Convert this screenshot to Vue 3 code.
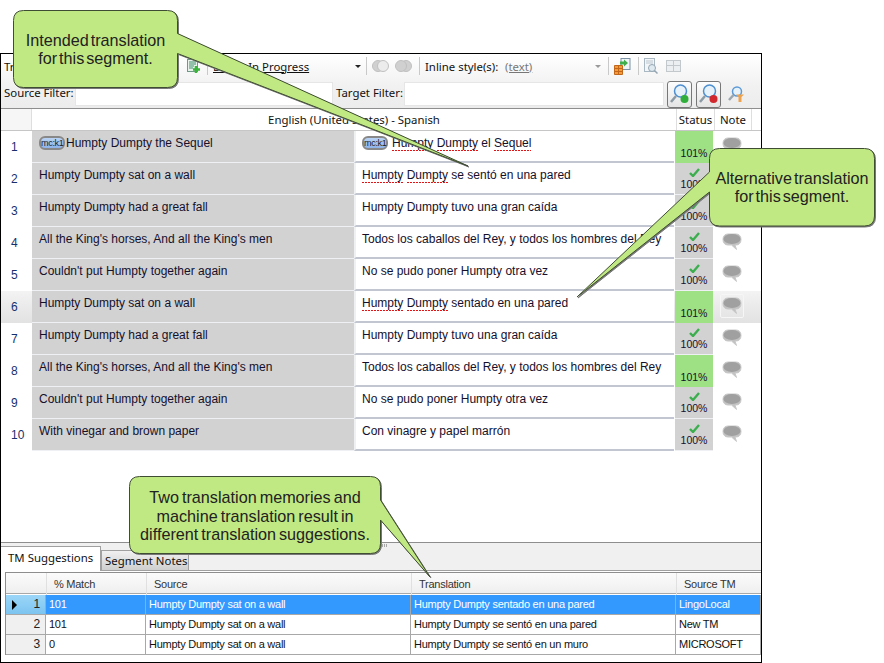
<script setup>
const rows = [
  { n: 1, source: "Humpty Dumpty the Sequel", tag: true, target: [["Humpty", 1], [" ", 0], ["Dumpty", 1], [" el ", 0], ["Sequel", 1]], pct: "101%", exact: true },
  { n: 2, source: "Humpty Dumpty sat on a wall", target: [["Humpty", 1], [" ", 0], ["Dumpty", 1], [" se sentó en una pared", 0]], pct: "100%" },
  { n: 3, source: "Humpty Dumpty had a great fall", target: [["Humpty Dumpty tuvo una gran caída", 0]], pct: "100%" },
  { n: 4, source: "All the King's horses, And all the King's men", target: [["Todos los caballos del Rey, y todos los hombres del Rey", 0]], pct: "100%" },
  { n: 5, source: "Couldn't put Humpty together again", target: [["No se pudo poner Humpty otra vez", 0]], pct: "100%" },
  { n: 6, source: "Humpty Dumpty sat on a wall", target: [["Humpty", 1], [" ", 0], ["Dumpty", 1], [" sentado en una pared", 0]], pct: "101%", exact: true, current: true },
  { n: 7, source: "Humpty Dumpty had a great fall", target: [["Humpty Dumpty tuvo una gran caída", 0]], pct: "100%" },
  { n: 8, source: "All the King's horses, And all the King's men", target: [["Todos los caballos del Rey, y todos los hombres del Rey", 0]], pct: "101%", exact: true },
  { n: 9, source: "Couldn't put Humpty together again", target: [["No se pudo poner Humpty otra vez", 0]], pct: "100%" },
  { n: 10, source: "With vinegar and brown paper", target: [["Con vinagre y papel marrón", 0]], pct: "100%" },
];

const suggestions = [
  { n: 1, match: "101", source: "Humpty Dumpty sat on a wall", translation: "Humpty Dumpty sentado en una pared", tm: "LingoLocal", selected: true },
  { n: 2, match: "101", source: "Humpty Dumpty sat on a wall", translation: "Humpty Dumpty se sentó en una pared", tm: "New TM" },
  { n: 3, match: "0", source: "Humpty Dumpty sat on a wall", translation: "Humpty Dumpty se sentó en un muro", tm: "MICROSOFT" },
];
</script>

<template>
  <div class="page">
    <div class="window">
      <div class="toolbar">
        <div class="tool-row">
          <span class="tool-label">Tr</span>
          <svg class="add-icon" width="14" height="15" viewBox="0 0 14 15">
            <rect x="0.500" y="0.500" width="10" height="12" fill="#e8f2ea" stroke="#6d9a86" />
            <path d="M2 3h7M2 5h7M2 7h5M2 9h4" stroke="#3f8f6a" />
            <path d="M9 7v7M6 10.500h7" stroke="#3cb43c" stroke-width="2.500" />
          </svg>
          <span class="sep"></span>
          <span class="status-select"><span class="status-first">Draft</span> In Progress</span>
          <span class="arrow dark"></span>
          <span class="sep"></span>
          <svg class="rings" width="17" height="14" viewBox="0 0 17 14">
            <circle cx="6" cy="7" r="5.500" fill="#d0d0d0" stroke="#c0c0c0" />
            <circle cx="11" cy="7" r="5.500" fill="#ececec" stroke="#c0c0c0" />
          </svg>
          <svg class="rings" width="17" height="14" viewBox="0 0 17 14">
            <circle cx="11" cy="7" r="5.500" fill="#d0d0d0" stroke="#c0c0c0" />
            <circle cx="6" cy="7" r="5.500" fill="#d0d0d0" stroke="#c0c0c0" />
          </svg>
          <span class="sep"></span>
          <span class="inline-label">Inline style(s):</span>
          <span class="inline-value">(text)</span>
          <span class="arrow light"></span>
          <span class="sep"></span>
          <svg class="export" width="17" height="17" viewBox="0 0 17 17">
            <rect x="7" y="0.500" width="9" height="11" fill="#eef4f8" stroke="#7d93a5" />
            <path d="M0.500 7.500h8v9h-8z" fill="#f29a3c" stroke="#c2661a" />
            <path d="M0.500 10.500h8M0.500 13.500h8M4.500 7.500v9" stroke="#c2661a" />
            <path d="M6 3.500h4v-2l4 3.500-4 3.500v-2h-4z" fill="#3fae4b" />
          </svg>
          <span class="sep"></span>
          <svg class="preview" width="15" height="17" viewBox="0 0 15 17">
            <rect x="0.500" y="0.500" width="10" height="13" fill="#f3f6f8" stroke="#a9b8c2" />
            <path d="M2 3h7M2 5h7" stroke="#bcc8d0" />
            <circle cx="8" cy="10" r="3.500" fill="#dfeaf0" stroke="#93a6b2" />
            <path d="M10.500 12.500l3 3" stroke="#93a6b2" stroke-width="1.500" />
          </svg>
          <svg class="grid-icon" width="15" height="12" viewBox="0 0 15 12">
            <rect x="0.500" y="0.500" width="14" height="11" fill="#eceff1" stroke="#c3c8cc" />
            <path d="M7.500 0.500v11M0.500 5.500h14" stroke="#c3c8cc" />
          </svg>
        </div>
        <div class="filter-row">
          <label class="filter-label source-label">Source Filter:</label>
          <div class="filter-input source-input"></div>
          <label class="filter-label target-label">Target Filter:</label>
          <div class="filter-input target-input"></div>
          <button class="find-btn">
            <svg width="21" height="22" viewBox="0 0 21 22">
              <circle cx="11.500" cy="8" r="6" fill="#e6f1fa" stroke="#4d8fd0" stroke-width="1.500" />
              <path d="M7 13l-5 6" stroke="#8c9aa5" stroke-width="2.500" />
              <circle cx="15.500" cy="16" r="4" fill="#2fae3c" />
            </svg>
          </button>
          <button class="find-btn">
            <svg width="21" height="22" viewBox="0 0 21 22">
              <circle cx="11.500" cy="8" r="6" fill="#e6f1fa" stroke="#4d8fd0" stroke-width="1.500" />
              <path d="M7 13l-5 6" stroke="#8c9aa5" stroke-width="2.500" />
              <circle cx="15.500" cy="16" r="4" fill="#d0282e" />
            </svg>
          </button>
          <svg class="find-plain" width="16" height="19" viewBox="0 0 16 19">
            <circle cx="9" cy="6.500" r="4.500" fill="#e6f1fa" stroke="#5b9ad6" stroke-width="1.500" />
            <path d="M5.500 10l-4.500 5" stroke="#9aa6b0" stroke-width="2.500" />
            <path d="M8 9.500h8l-2.500 2.500v5h-3v-5z" fill="#eda24e" />
          </svg>
        </div>
      </div>

      <div class="grid-head">
        <div class="head-num"></div>
        <div class="head-lang">English (United States) - Spanish</div>
        <div class="head-cell">Status</div>
        <div class="head-cell">Note</div>
      </div>

      <div class="grid-body">
        <div v-for="row in rows" :key="row.n" class="row" :class="{ current: row.current }">
          <div class="num">{{ row.n }}</div>
          <div class="source">
            <span v-if="row.tag" class="tag">mc:k1</span>{{ row.source }}
          </div>
          <div class="target" :class="{ tagged: row.tag }">
            <span v-if="row.tag" class="tag">mc:k1</span>
            <template v-for="(part, i) in row.target" :key="i"><span :class="{ misspelt: part[1] }">{{ part[0] }}</span></template>
          </div>
          <div class="status" :class="{ exact: row.exact }">
            <svg v-if="!row.exact" class="check" width="11" height="9" viewBox="0 0 11 9">
              <path d="M1 5l3 3 6-7" fill="none" stroke="#3dae4f" stroke-width="2.400" />
            </svg>
            <span>{{ row.pct }}</span>
          </div>
          <div class="note">
            <span class="note-btn">
              <svg width="20" height="17" viewBox="0 0 20 17">
                <path d="M6 1h8c3 0 5 2 5 5.500S17 12 14 12h-1l1.500 4.500-5-4.500H6c-3 0-5-2-5-5.500S3 1 6 1z" fill="#c2c2c2" stroke="#c8c8c8" />
                <ellipse cx="10" cy="6" rx="8.500" ry="5" fill="#a0a0a0" />
              </svg>
            </span>
          </div>
        </div>
      </div>

      <div class="spacer"></div>
      <div class="grip"></div>

      <div class="tabs">
        <div class="tab active">TM Suggestions</div>
        <div class="tab">Segment Notes</div>
      </div>

      <div class="tm-panel">
        <div class="tm-table">
          <div class="tm-head">
            <div class="tm-corner"></div>
            <div class="tm-th">% Match</div>
            <div class="tm-th">Source</div>
            <div class="tm-th">Translation</div>
            <div class="tm-th">Source TM</div>
          </div>
          <div v-for="s in suggestions" :key="s.n" class="tm-row" :class="{ selected: s.selected }">
            <div class="tm-num">
              <span v-if="s.selected" class="pointer"></span>
              <span class="tm-n">{{ s.n }}</span>
            </div>
            <div class="tm-td">{{ s.match }}</div>
            <div class="tm-td">{{ s.source }}</div>
            <div class="tm-td">{{ s.translation }}</div>
            <div class="tm-td">{{ s.tm }}</div>
          </div>
        </div>
      </div>
    </div>

    <svg class="shapes" width="884" height="663" viewBox="0 0 884 663">
      <path d="M23.500 10.500H167.500Q177.500 10.500 177.500 20.500V33.500L468 166L177.500 53.500V77.500Q177.500 87.500 167.500 87.500H23.500Q13.500 87.500 13.500 77.500V20.500Q13.500 10.500 23.500 10.500Z" />
      <path d="M719.500 148.500H864.500Q874.500 148.500 874.500 158.500V216Q874.500 226 864.500 226H719.500Q709.500 226 709.500 216V192L577 297L709.500 172V158.500Q709.500 148.500 719.500 148.500Z" />
      <path d="M139.500 476.500H370.500Q380.500 476.500 380.500 486.500V500L430 577L380.500 520V543.500Q380.500 553.500 370.500 553.500H139.500Q129.500 553.500 129.500 543.500V486.500Q129.500 476.500 139.500 476.500Z" />
    </svg>
    <div class="callout one">Intended translation<br />for this segment.</div>
    <div class="callout two">Alternative translation<br />for this segment.</div>
    <div class="callout three">Two translation memories and<br />machine translation result in<br />different translation suggestions.</div>
  </div>
</template>

<style scoped>
.page {
  position: relative;
  width: 884px;
  height: 663px;
  background: #fff;
  overflow: hidden;
  padding-top: 53px;
  box-sizing: border-box;
  font-family: "Liberation Sans", Arial, sans-serif;
}

.window {
  position: relative;
  width: 762px;
  height: 610px;
  box-sizing: border-box;
  border: 1px solid #000;
  display: flex;
  flex-direction: column;
  background: #fff;
  font-family: "Noto Sans", Tahoma, sans-serif;
  font-size: 11.400px;
  color: #111;
}

.toolbar {
  height: 54px;
  flex: none;
  background: linear-gradient(#fff, #f1f1f1 60%, #ececec);
  border-bottom: 1px solid #8e8e8e;
}

.tool-row {
  height: 26px;
  box-sizing: border-box;
  padding: 0 0 2px 3px;
  display: flex;
  align-items: center;
}

.tool-label {
  width: 183px;
  flex: none;
}

.add-icon {
  margin-right: 6px;
  flex: none;
}

.sep {
  width: 1px;
  height: 18px;
  background: #c9c9c9;
  flex: none;
}

.status-select {
  width: 140px;
  flex: none;
  margin-left: 5px;
  text-decoration: underline;
  color: #111;
  white-space: nowrap;
}

.status-first {
  letter-spacing: 1px;
}

.arrow {
  width: 0;
  height: 0;
  flex: none;
  border-left: 3px solid transparent;
  border-right: 3px solid transparent;
  border-top: 3px solid #222;
  margin-left: 2px;
  margin-right: 5px;
}

.arrow.light {
  border-top-color: #999;
  margin-left: 0;
  margin-right: 7px;
}

.rings {
  margin-left: 5px;
  flex: none;
}

.rings + .rings {
  margin-left: 6px;
}

.rings + .sep {
  margin-left: 7px;
}

.inline-label {
  width: 72px;
  flex: none;
  margin-left: 5px;
  white-space: nowrap;
}

.inline-value {
  width: 90px;
  flex: none;
  margin-left: 8px;
  color: #777;
  text-decoration: underline;
}

.export {
  margin-left: 5px;
  margin-right: 7px;
  flex: none;
}

.preview {
  margin-left: 5px;
  flex: none;
}

.grid-icon {
  margin-left: 7px;
  flex: none;
}

.filter-row {
  height: 28px;
  display: flex;
  align-items: center;
}

.filter-label {
  white-space: nowrap;
  padding-bottom: 4px;
  flex: none;
}

.source-label {
  width: 70px;
  margin-left: 3px;
}

.target-label {
  width: 66px;
  margin-left: 3px;
}

.filter-input {
  height: 24px;
  flex: none;
  background: #fff;
  border: 1px solid #e6e6e6;
  box-sizing: border-box;
}

.source-input {
  width: 258px;
  margin-left: 1px;
}

.target-input {
  width: 260px;
  margin-left: 2px;
}

.find-btn {
  width: 25px;
  height: 27px;
  flex: none;
  padding: 0;
  margin-left: 3px;
  display: flex;
  align-items: center;
  justify-content: center;
  background: linear-gradient(#fdfdfd, #e4e4e4);
  border: 1px solid #777;
  border-radius: 3px;
}

.find-btn + .find-btn {
  margin-left: 4px;
}

.find-plain {
  margin-left: 7px;
  flex: none;
}

.grid-head {
  height: 21px;
  flex: none;
  display: grid;
  grid-template-columns: 31px 644px 38px 38px;
  background: #fff;
  border-bottom: 1px solid #c6c6c6;
  line-height: 21px;
}

.head-num {
  background: #f6f6f6;
  border-right: 1px solid #dedede;
}

.head-lang {
  text-align: center;
}

.head-cell {
  text-align: center;
  border-left: 1px solid #dedede;
}

.head-cell:last-child {
  border-right: 1px solid #dedede;
}

.row {
  height: 32px;
  display: grid;
  grid-template-columns: 31px 322px 321px 38px 38px;
  box-sizing: border-box;
  font-family: "Liberation Sans", Arial, sans-serif;
  font-size: 12px;
}

.row.current {
  background: linear-gradient(#f3f3f3, #e2e2e2);
}

.num {
  padding: 9px 0 0 10px;
  color: #16306e;
  font-size: 12px;
}

.source {
  background: #d2d2d2;
  border-bottom: 1px solid #eef0f4;
  padding: 5px 0 0 7px;
  color: #14102c;
  white-space: nowrap;
}

.target {
  background: #fff;
  border-left: 2px solid #eef0f2;
  border-bottom: 2px solid #c2c6d0;
  margin-right: 1px;
  padding: 5px 0 0 6px;
  white-space: nowrap;
  color: #14102c;
}

.tag {
  display: inline-block;
  box-sizing: border-box;
  width: 26px;
  height: 14px;
  margin-right: 1px;
  border: 2px solid #888;
  border-radius: 6px;
  background: linear-gradient(#b9d3f5, #8db3ea);
  color: #222;
  font-size: 9px;
  line-height: 10px;
  text-align: center;
  vertical-align: 1px;
  letter-spacing: -0.3px;
}

.target .tag {
  margin-right: 4px;
}

.misspelt {
  padding-bottom: 1px;
  background-image: repeating-linear-gradient(90deg, #e01414 0 2px, transparent 2px 3px);
  background-size: 100% 1px;
  background-repeat: no-repeat;
  background-position: 0 100%;
}

.status {
  background: #d2d2d2;
  display: flex;
  flex-direction: column;
  align-items: center;
  justify-content: flex-end;
  font-size: 10.500px;
  padding-bottom: 4px;
  box-sizing: border-box;
  border-bottom: 1px solid #eef0f4;
  color: #14102c;
}

.status.exact {
  background: #9de184;
  border-bottom: none;
}

.check {
  margin-bottom: 1px;
}

.note {
  display: flex;
  justify-content: center;
  align-items: center;
}

.note-btn {
  display: flex;
  width: 24px;
  height: 24px;
  align-items: center;
  justify-content: center;
  box-sizing: border-box;
  margin-top: -3px;
}

.current .note-btn {
  border: 1px solid #f6f6f6;
  border-radius: 2px;
}

.spacer {
  height: 91px;
  flex: none;
  background: #fff;
  border-bottom: 1px solid #8e8e8e;
}

.grip {
  position: absolute;
  left: 381px;
  top: 490px;
  width: 6px;
  height: 3px;
  background: repeating-linear-gradient(90deg, #a8a8a8 0 1px, transparent 1px 2px);
}

.tabs {
  height: 27px;
  flex: none;
  display: flex;
  align-items: flex-end;
  background: #f0f0f0;
  border-bottom: 1px solid #a0a0a0;
}

.tab {
  height: 20px;
  box-sizing: border-box;
  width: 88px;
  padding-left: 3px;
  border: 1px solid #a0a0a0;
  border-bottom: none;
  background: linear-gradient(#f0f0f0, #cfcfcf);
  line-height: 19px;
  white-space: nowrap;
  margin-bottom: 0;
}

.tab.active {
  height: 25px;
  width: 100px;
  padding-left: 7px;
  background: #fff;
  line-height: 22px;
  margin-bottom: -1px;
  border-left: none;
  z-index: 1;
}

.tm-panel {
  flex: 1;
  background: #fff;
  padding: 1px 0 0 4px;
}

.tm-table {
  border-left: 1px solid #8e8e8e;
  border-top: 1px solid #8e8e8e;
  font-family: "Liberation Sans", Arial, sans-serif;
  font-size: 11px;
  letter-spacing: -0.25px;
}

.tm-head,
.tm-row {
  display: grid;
  grid-template-columns: 40px 100px 265px 265px 85px;
}

.tm-head {
  height: 21px;
  margin-bottom: 1px;
  box-sizing: border-box;
  background: linear-gradient(#fbfbfb, #efefef);
  border-bottom: 1px solid #a8a8a8;
  line-height: 22px;
  color: #333;
}

.tm-th {
  padding-left: 7px;
  border-left: 1px solid #e0e0e0;
}

.tm-row {
  height: 20px;
  line-height: 19px;
  box-sizing: border-box;
  border-bottom: 1px solid #a8a8a8;
  color: #111;
}

.tm-row.selected {
  background: #3399ff;
  color: #fff;
}

.tm-num {
  background: #f0f0f0;
  position: relative;
  text-align: right;
  padding-right: 5px;
  color: #222;
  font-size: 12px;
  border-right: 1px solid #a8a8a8;
}

.selected .tm-num {
  background: linear-gradient(#9bd6f8, #7cc4f0);
  color: #222;
}

.pointer {
  position: absolute;
  left: 6px;
  top: 5px;
  width: 0;
  height: 0;
  border-top: 5px solid transparent;
  border-bottom: 5px solid transparent;
  border-left: 5px solid #000;
}

.tm-td {
  padding-left: 3px;
  border-right: 1px solid #a8a8a8;
  white-space: nowrap;
  overflow: hidden;
}

.shapes {
  position: absolute;
  left: 0;
  top: 0;
  pointer-events: none;
}

.shapes path {
  fill: #c1e983;
  stroke: #3f4d33;
  stroke-width: 1;
  filter: drop-shadow(1px 1px 0.5px #777);
}

.callout {
  position: absolute;
  box-sizing: border-box;
  display: flex;
  align-items: center;
  justify-content: center;
  text-align: center;
  font-family: "Liberation Sans", Arial, sans-serif;
  font-size: 16.200px;
  line-height: 18.500px;
  word-spacing: -2.500px;
  color: #222;
  white-space: nowrap;
}

.callout.one {
  left: 13px;
  top: 10px;
  width: 165px;
  height: 78px;
}

.callout.two {
  left: 709px;
  top: 148px;
  width: 166px;
  height: 78px;
}

.callout.three {
  left: 129px;
  top: 477px;
  width: 252px;
  height: 78px;
  word-spacing: -1.500px;
}
</style>
